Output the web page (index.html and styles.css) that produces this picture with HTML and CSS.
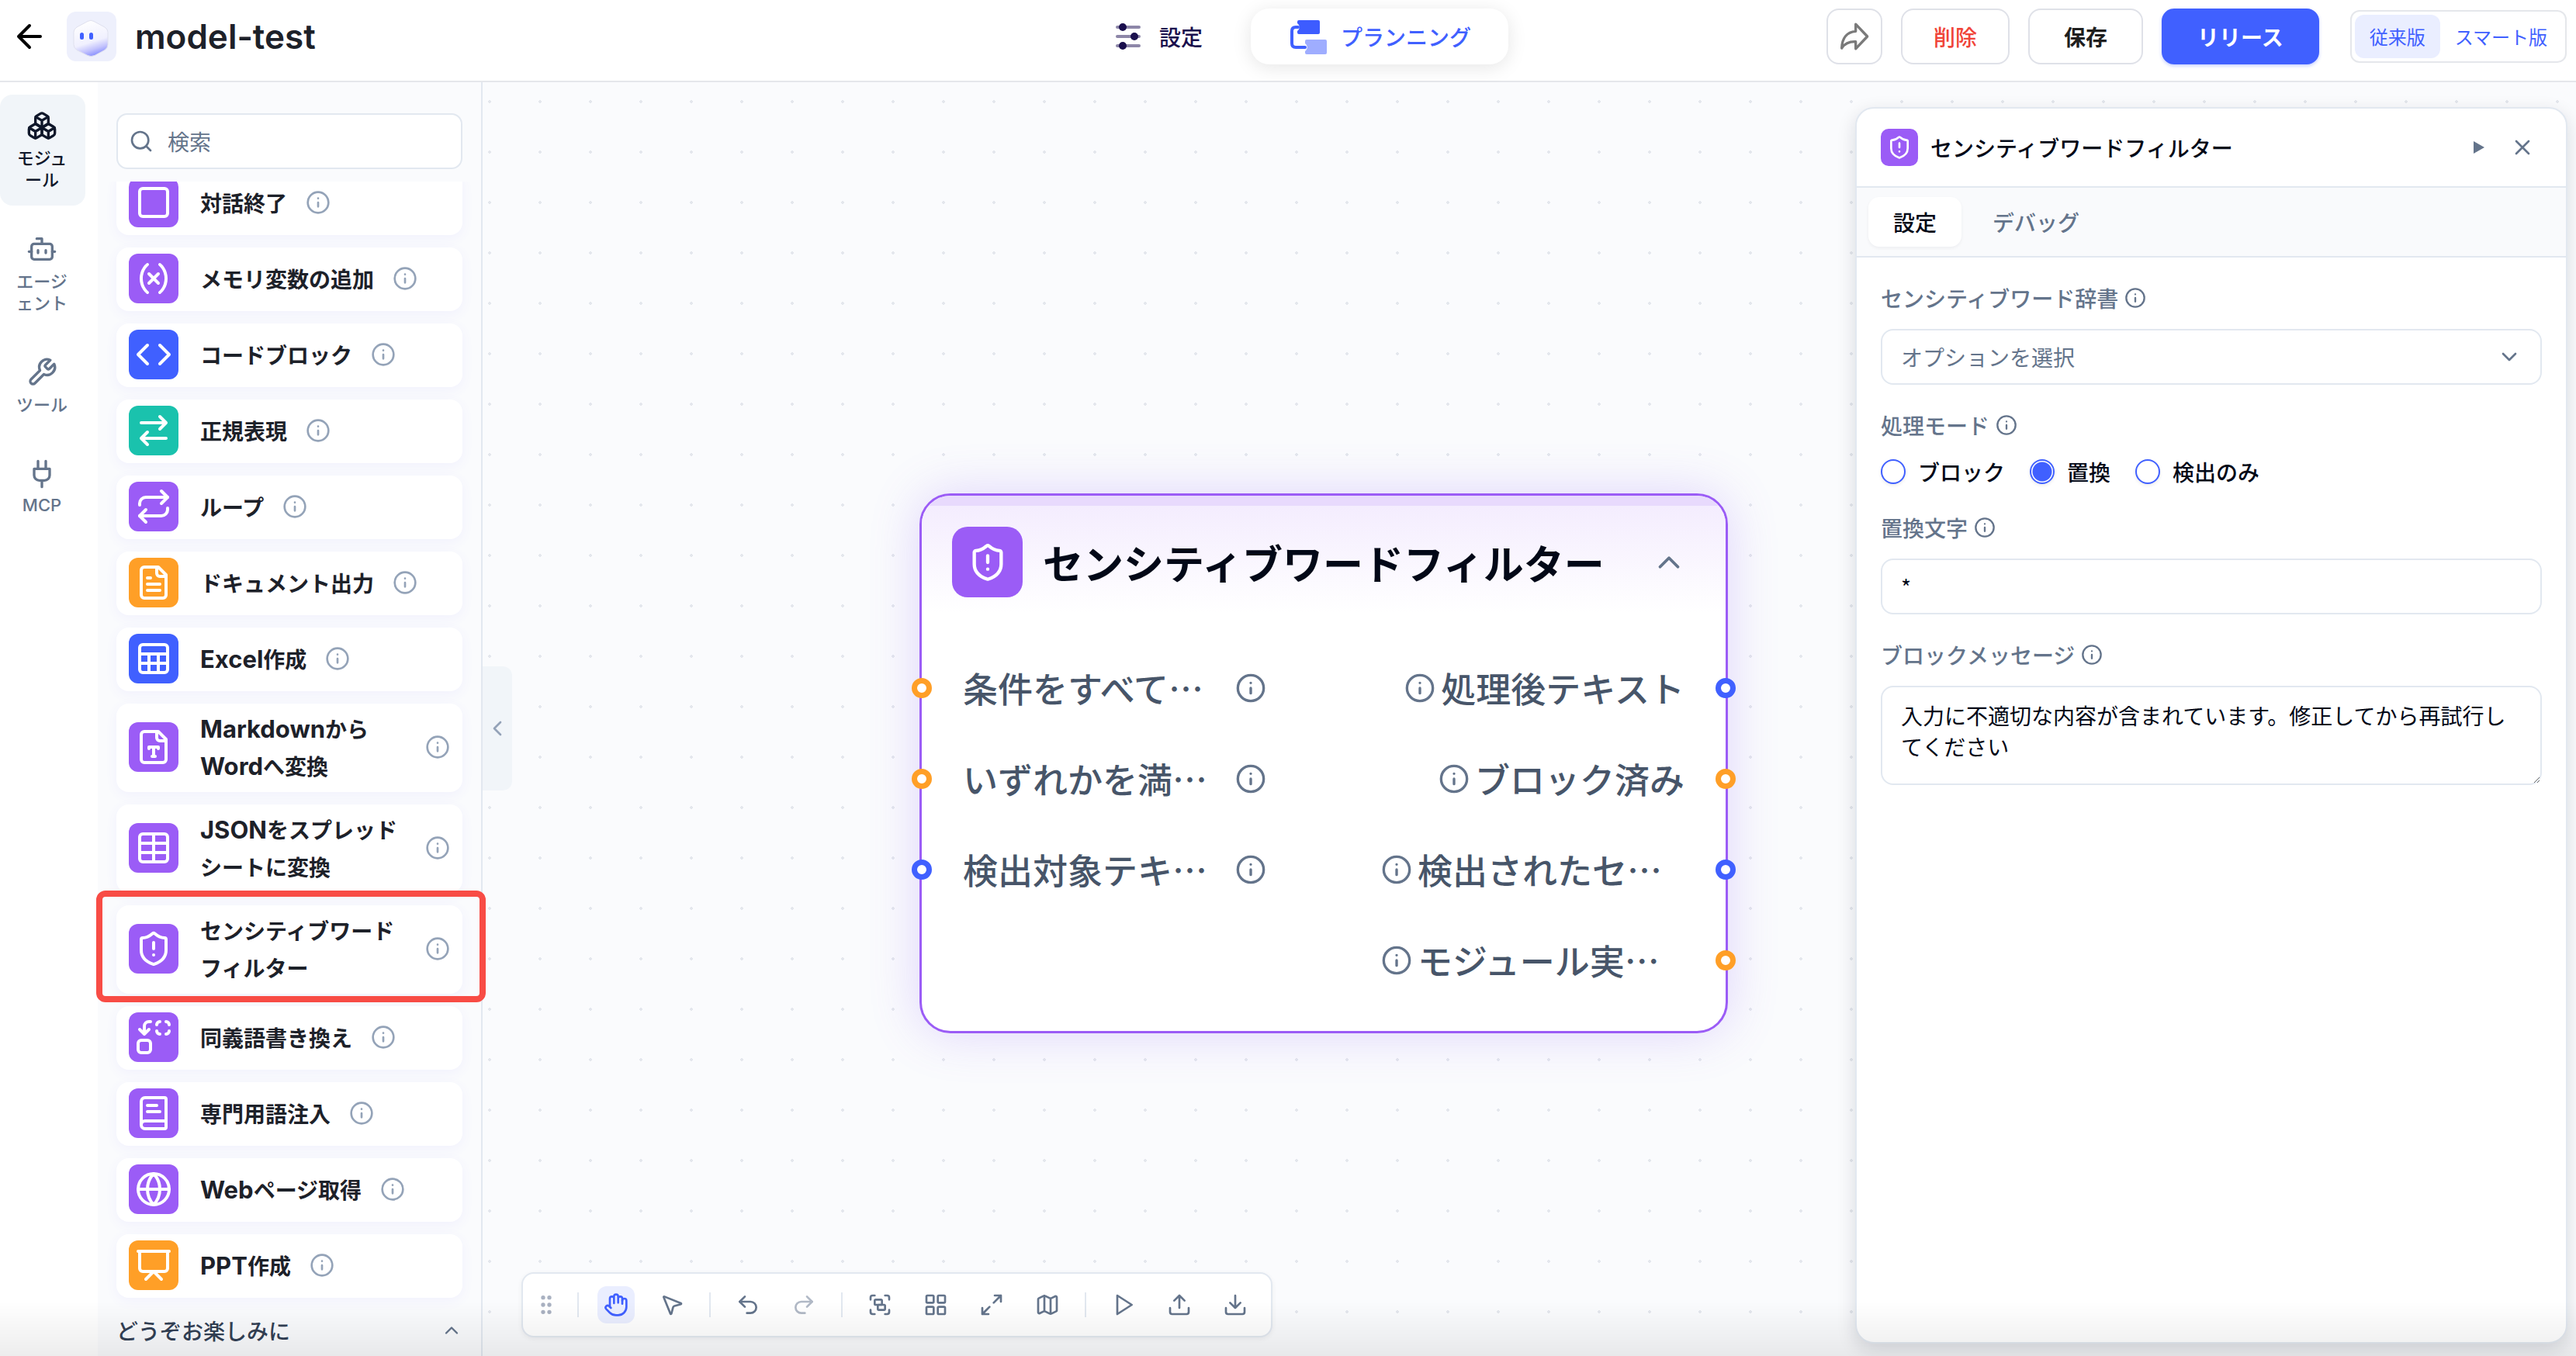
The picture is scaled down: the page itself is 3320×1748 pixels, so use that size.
FILE: index.html
```html
<!DOCTYPE html>
<html lang="ja">
<head>
    <meta charset="UTF-8">
    <meta name="viewport" content="width=device-width, initial-scale=1.0">
    <title>model-test</title>
    <link rel="stylesheet" href="styles.css">
</head>
<body>
    <!-- Icon sprite -->
    <svg class="sprite" aria-hidden="true">
        <symbol id="i-info" viewBox="0 0 24 24"><circle cx="12" cy="12" r="10"/><path d="M12 16v-4M12 8h.01"/></symbol>
        <symbol id="i-back" viewBox="0 0 24 24"><path d="m12 19-7-7 7-7M19 12H5"/></symbol>
        <symbol id="i-search" viewBox="0 0 24 24"><circle cx="11" cy="11" r="8"/><path d="m21 21-4.3-4.3"/></symbol>
        <symbol id="i-boxes" viewBox="0 0 24 24"><path d="M2.97 12.92A2 2 0 0 0 2 14.63v3.24a2 2 0 0 0 .97 1.71l3 1.8a2 2 0 0 0 2.06 0L12 19v-5.5l-5-3-4.03 2.42Z"/><path d="m7 16.5-4.74-2.85M7 16.5l5-3M7 16.5v5.17"/><path d="M12 13.5V19l3.97 2.38a2 2 0 0 0 2.06 0l3-1.8a2 2 0 0 0 .97-1.71v-3.24a2 2 0 0 0-.97-1.71L17 10.5l-5 3Z"/><path d="m17 16.5-5-3M17 16.5l4.74-2.85M17 16.5v5.17"/><path d="M7.97 4.42A2 2 0 0 0 7 6.13v4.37l5 3 5-3V6.13a2 2 0 0 0-.97-1.71l-3-1.8a2 2 0 0 0-2.06 0l-3 1.8Z"/><path d="M12 8 7.26 5.15M12 8l4.74-2.85M12 13.5V8"/></symbol>
        <symbol id="i-bot" viewBox="0 0 24 24"><path d="M12 8V4H8"/><rect width="16" height="12" x="4" y="8" rx="2"/><path d="M2 14h2M20 14h2M15 13v2M9 13v2"/></symbol>
        <symbol id="i-wrench" viewBox="0 0 24 24"><path d="M14.7 6.3a1 1 0 0 0 0 1.4l1.6 1.6a1 1 0 0 0 1.4 0l3.77-3.77a6 6 0 0 1-7.94 7.94l-6.91 6.91a2.12 2.12 0 0 1-3-3l6.91-6.91a6 6 0 0 1 7.94-7.94l-3.76 3.76z"/></symbol>
        <symbol id="i-plug" viewBox="0 0 24 24"><path d="M12 22v-5M9 8V2M15 8V2M18 8v5a4 4 0 0 1-4 4h-4a4 4 0 0 1-4-4V8Z"/></symbol>
        <symbol id="i-square" viewBox="0 0 24 24"><rect width="18" height="18" x="3" y="3" rx="2"/></symbol>
        <symbol id="i-variable" viewBox="0 0 24 24"><path d="M8 21s-4-3-4-9 4-9 4-9M16 3s4 3 4 9-4 9-4 9M15 9l-6 6M9 9l6 6"/></symbol>
        <symbol id="i-code" viewBox="0 0 24 24"><path d="m16 18 6-6-6-6M8 6l-6 6 6 6"/></symbol>
        <symbol id="i-swap" viewBox="0 0 24 24"><path d="m16 3 4 4-4 4M20 7H4M8 21l-4-4 4-4M4 17h16"/></symbol>
        <symbol id="i-repeat" viewBox="0 0 24 24"><path d="m17 2 4 4-4 4"/><path d="M3 11v-1a4 4 0 0 1 4-4h14M7 22l-4-4 4-4"/><path d="M21 13v1a4 4 0 0 1-4 4H3"/></symbol>
        <symbol id="i-file" viewBox="0 0 24 24"><path d="M15 2H6a2 2 0 0 0-2 2v16a2 2 0 0 0 2 2h12a2 2 0 0 0 2-2V7Z"/><path d="M14 2v4a2 2 0 0 0 2 2h4M10 9H8M16 13H8M16 17H8"/></symbol>
        <symbol id="i-sheet" viewBox="0 0 24 24"><rect width="18" height="18" x="3" y="3" rx="2"/><path d="M3 9h18M3 15h18M9 9v12M15 9v12"/></symbol>
        <symbol id="i-filetype" viewBox="0 0 24 24"><path d="M15 2H6a2 2 0 0 0-2 2v16a2 2 0 0 0 2 2h12a2 2 0 0 0 2-2V7Z"/><path d="M14 2v4a2 2 0 0 0 2 2h4M9 13v-1h6v1M12 12v6M11 18h2"/></symbol>
        <symbol id="i-table" viewBox="0 0 24 24"><rect width="18" height="18" x="3" y="3" rx="2"/><path d="M12 3v18M3 9h18M3 15h18"/></symbol>
        <symbol id="i-shield" viewBox="0 0 24 24"><path d="M20 13c0 5-3.5 7.5-7.66 8.95a1 1 0 0 1-.67-.01C7.5 20.5 4 18 4 13V6a1 1 0 0 1 1-1c2 0 4.5-1.2 6.24-2.72a1.17 1.17 0 0 1 1.52 0C14.51 3.81 17 5 19 5a1 1 0 0 1 1 1z"/><path d="M12 8v4M12 16h.01"/></symbol>
        <symbol id="i-replace" viewBox="0 0 24 24"><path d="M14 4c0-1.1.9-2 2-2M20 2c1.1 0 2 .9 2 2M22 8c0 1.1-.9 2-2 2M16 10c-1.1 0-2-.9-2-2M3 7l3 3 3-3M6 10V5c0-1.7 1.3-3 3-3h1"/><rect width="8" height="8" x="2" y="14" rx="2"/></symbol>
        <symbol id="i-book" viewBox="0 0 24 24"><path d="M4 19.5v-15A2.5 2.5 0 0 1 6.5 2H19a1 1 0 0 1 1 1v18a1 1 0 0 1-1 1H6.5a1 1 0 0 1 0-5H20M8 11h8M8 7h6"/></symbol>
        <symbol id="i-globe" viewBox="0 0 24 24"><circle cx="12" cy="12" r="10"/><path d="M12 2a14.5 14.5 0 0 0 0 20 14.5 14.5 0 0 0 0-20M2 12h20"/></symbol>
        <symbol id="i-ppt" viewBox="0 0 24 24"><path d="M2 3h20M21 3v11a2 2 0 0 1-2 2H5a2 2 0 0 1-2-2V3M7 21l5-5 5 5"/></symbol>
        <symbol id="i-up" viewBox="0 0 24 24"><path d="m18 15-6-6-6 6"/></symbol>
        <symbol id="i-down" viewBox="0 0 24 24"><path d="m6 9 6 6 6-6"/></symbol>
        <symbol id="i-left" viewBox="0 0 24 24"><path d="m15 18-6-6 6-6"/></symbol>
        <symbol id="i-close" viewBox="0 0 24 24"><path d="M18 6 6 18M6 6l12 12"/></symbol>
        <symbol id="i-grip" viewBox="0 0 24 24"><circle cx="9" cy="12" r="1"/><circle cx="9" cy="5" r="1"/><circle cx="9" cy="19" r="1"/><circle cx="15" cy="12" r="1"/><circle cx="15" cy="5" r="1"/><circle cx="15" cy="19" r="1"/></symbol>
        <symbol id="i-hand" viewBox="0 0 24 24"><path d="M18 11V6a2 2 0 0 0-4 0M14 10V4a2 2 0 0 0-4 0v2M10 10.5V6a2 2 0 0 0-4 0v8"/><path d="M18 8a2 2 0 1 1 4 0v6a8 8 0 0 1-8 8h-2c-2.8 0-4.5-.86-5.99-2.34l-3.6-3.6a2 2 0 0 1 2.83-2.82L7 15"/></symbol>
        <symbol id="i-pointer" viewBox="0 0 24 24"><path d="M4.04 4.69a.5.5 0 0 1 .65-.65l16 6.5a.5.5 0 0 1-.06.95l-6.13 1.58a2 2 0 0 0-1.43 1.43l-1.58 6.13a.5.5 0 0 1-.95.06z"/></symbol>
        <symbol id="i-undo" viewBox="0 0 24 24"><path d="M9 14 4 9l5-5"/><path d="M4 9h10.5a5.5 5.5 0 0 1 0 11H11"/></symbol>
        <symbol id="i-redo" viewBox="0 0 24 24"><path d="m15 14 5-5-5-5"/><path d="M20 9H9.5a5.5 5.5 0 0 0 0 11H13"/></symbol>
        <symbol id="i-group" viewBox="0 0 24 24"><path d="M3 7V5c0-1.1.9-2 2-2h2M17 3h2c1.1 0 2 .9 2 2v2M21 17v2c0 1.1-.9 2-2 2h-2M7 21H5c-1.1 0-2-.9-2-2v-2"/><rect width="7" height="5" x="7" y="7" rx="1"/><rect width="7" height="5" x="10" y="12" rx="1"/></symbol>
        <symbol id="i-grid" viewBox="0 0 24 24"><rect width="7" height="7" x="3" y="3" rx="1"/><rect width="7" height="7" x="14" y="3" rx="1"/><rect width="7" height="7" x="14" y="14" rx="1"/><rect width="7" height="7" x="3" y="14" rx="1"/></symbol>
        <symbol id="i-expand" viewBox="0 0 24 24"><path d="M15 3h6v6M9 21H3v-6M21 3l-7 7M3 21l7-7"/></symbol>
        <symbol id="i-map" viewBox="0 0 24 24"><path d="M14.1 5.55a2 2 0 0 0 1.8 0l3.65-1.83A1 1 0 0 1 21 4.62v12.76a1 1 0 0 1-.55.9l-4.55 2.27a2 2 0 0 1-1.8 0l-4.2-2.1a2 2 0 0 0-1.8 0l-3.65 1.83A1 1 0 0 1 3 19.38V6.62a1 1 0 0 1 .55-.9l4.55-2.27a2 2 0 0 1 1.8 0zM15 5.76v15M9 3.24v15"/></symbol>
        <symbol id="i-play" viewBox="0 0 24 24"><path d="m6 3 14 9-14 9z"/></symbol>
        <symbol id="i-upload" viewBox="0 0 24 24"><path d="M21 15v4a2 2 0 0 1-2 2H5a2 2 0 0 1-2-2v-4M17 8l-5-5-5 5M12 3v12"/></symbol>
        <symbol id="i-download" viewBox="0 0 24 24"><path d="M21 15v4a2 2 0 0 1-2 2H5a2 2 0 0 1-2-2v-4M7 10l5 5 5-5M12 15V3"/></symbol>
        <symbol id="i-share" viewBox="0 0 24 24"><path d="M13 2.5 22 12l-9 9.5V16C8 15.8 4.5 17.5 2.2 21 2.5 13.5 6 8.5 13 8Z"/></symbol>
    </svg>

    <header class="topbar">
        <div class="topbar-left">
            <button class="back" aria-label="戻る"><svg class="icon"><use href="#i-back"/></svg></button>
            <div class="avatar">
                <svg viewBox="0 0 64 64" width="64" height="64">
                    <defs>
                        <linearGradient id="bot-fill" x1="0.35" y1="0" x2="0.65" y2="1">
                            <stop offset="0" stop-color="#ffffff"/>
                            <stop offset="0.6" stop-color="#f0f0fe"/>
                            <stop offset="0.8" stop-color="#c3c3fd"/>
                            <stop offset="1" stop-color="#7f88ff"/>
                        </linearGradient>
                    </defs>
                    <path d="M27 12.5q4-2.5 8 0l14 7.5q4 2.5 4 6.5v16q0 4-4 7l-13 7q-5 2-9 0l-14-7q-4-3-4-7v-16q0-4 4-6.5z" fill="url(#bot-fill)" stroke="#dfe0ee" stroke-width="1"/>
                    <rect x="17" y="27" width="5" height="9" rx="2.5" fill="#4060ff"/>
                    <rect x="29" y="27" width="5" height="9" rx="2.5" fill="#4060ff"/>
                </svg>
            </div>
            <h1>model-test</h1>
        </div>
        <nav class="topbar-tabs">
            <button class="top-tab">
                <svg viewBox="0 0 36 36" width="36" height="36">
                    <path d="M4 6h28M4 18h28M4 30h28" stroke="#8d86a8" stroke-width="4" stroke-linecap="round"/>
                    <circle cx="11" cy="6" r="5" fill="#1a0f4d"/>
                    <circle cx="26" cy="18" r="5" fill="#1a0f4d"/>
                    <circle cx="11" cy="30" r="5" fill="#1a0f4d"/>
                </svg>
                設定
            </button>
            <button class="top-tab active">
                <svg viewBox="0 0 52 48" width="52" height="48">
                    <path d="M14 3h25q2 0 2 2v14q0 2-2 2H14q-2 0-2-2v-2a6 6 0 0 0 0-10V5q0-2 2-2z" fill="#3d5cff"/>
                    <path d="M24 28h24q2 0 2 2v15q0 2-2 2H24q-2 0-2-2v-2a6 6 0 0 0 0-10v-3q0-2 2-2z" fill="#9fadff"/>
                    <path d="M13 12H10q-5 0-5 5v16q0 5 5 5h12" fill="none" stroke="#4060ff" stroke-width="4" stroke-linecap="round"/>
                </svg>
                プランニング
            </button>
        </nav>
        <div class="topbar-right">
            <button class="btn btn-icon" aria-label="共有"><svg class="icon"><use href="#i-share"/></svg></button>
            <button class="btn btn-delete">削除</button>
            <button class="btn btn-save">保存</button>
            <button class="btn btn-release">リリース</button>
            <div class="version">
                <button class="active">従来版</button>
                <button>スマート版</button>
            </div>
        </div>
    </header>

    <div class="workspace">
        <nav class="rail">
            <button class="rail-item active"><svg class="icon"><use href="#i-boxes"/></svg><span>モジュール</span></button>
            <button class="rail-item"><svg class="icon"><use href="#i-bot"/></svg><span>エージェント</span></button>
            <button class="rail-item"><svg class="icon"><use href="#i-wrench"/></svg><span>ツール</span></button>
            <button class="rail-item"><svg class="icon"><use href="#i-plug"/></svg><span class="en">MCP</span></button>
        </nav>

        <aside class="modules">
            <div class="search">
                <svg class="icon"><use href="#i-search"/></svg>
                <input type="text" placeholder="検索" aria-label="検索">
            </div>
            <div class="module-scroll">
                <ul class="module-list">
                    <li class="module"><span class="tile purple"><svg class="icon"><use href="#i-square"/></svg></span><span class="name">対話終了</span><svg class="icon info"><use href="#i-info"/></svg></li>
                    <li class="module"><span class="tile purple"><svg class="icon"><use href="#i-variable"/></svg></span><span class="name">メモリ変数の追加</span><svg class="icon info"><use href="#i-info"/></svg></li>
                    <li class="module"><span class="tile blue"><svg class="icon"><use href="#i-code"/></svg></span><span class="name">コードブロック</span><svg class="icon info"><use href="#i-info"/></svg></li>
                    <li class="module"><span class="tile teal"><svg class="icon"><use href="#i-swap"/></svg></span><span class="name">正規表現</span><svg class="icon info"><use href="#i-info"/></svg></li>
                    <li class="module"><span class="tile purple"><svg class="icon"><use href="#i-repeat"/></svg></span><span class="name">ループ</span><svg class="icon info"><use href="#i-info"/></svg></li>
                    <li class="module"><span class="tile orange"><svg class="icon"><use href="#i-file"/></svg></span><span class="name">ドキュメント出力</span><svg class="icon info"><use href="#i-info"/></svg></li>
                    <li class="module"><span class="tile blue"><svg class="icon"><use href="#i-sheet"/></svg></span><span class="name"><span class="en">Excel</span>作成</span><svg class="icon info"><use href="#i-info"/></svg></li>
                    <li class="module"><span class="tile purple"><svg class="icon"><use href="#i-filetype"/></svg></span><span class="name"><span class="en">Markdown</span>から<span class="en">Word</span>へ変換</span><svg class="icon info"><use href="#i-info"/></svg></li>
                    <li class="module"><span class="tile purple"><svg class="icon"><use href="#i-table"/></svg></span><span class="name"><span class="en">JSON</span>をスプレッドシートに変換</span><svg class="icon info"><use href="#i-info"/></svg></li>
                    <li class="module marked"><span class="tile purple"><svg class="icon"><use href="#i-shield"/></svg></span><span class="name">センシティブワードフィルター</span><svg class="icon info"><use href="#i-info"/></svg></li>
                    <li class="module"><span class="tile purple"><svg class="icon"><use href="#i-replace"/></svg></span><span class="name">同義語書き換え</span><svg class="icon info"><use href="#i-info"/></svg></li>
                    <li class="module"><span class="tile purple"><svg class="icon"><use href="#i-book"/></svg></span><span class="name">専門用語注入</span><svg class="icon info"><use href="#i-info"/></svg></li>
                    <li class="module"><span class="tile purple"><svg class="icon"><use href="#i-globe"/></svg></span><span class="name"><span class="en">Web</span>ページ取得</span><svg class="icon info"><use href="#i-info"/></svg></li>
                    <li class="module"><span class="tile orange"><svg class="icon"><use href="#i-ppt"/></svg></span><span class="name"><span class="en">PPT</span>作成</span><svg class="icon info"><use href="#i-info"/></svg></li>
                </ul>
                <button class="module-group">どうぞお楽しみに<svg class="icon"><use href="#i-up"/></svg></button>
            </div>
        </aside>

        <main class="canvas">
            <button class="collapse" aria-label="折りたたむ"><svg class="icon"><use href="#i-left"/></svg></button>

            <section class="node">
                <div class="node-head">
                    <span class="node-tile"><svg class="icon"><use href="#i-shield"/></svg></span>
                    <h2>センシティブワードフィルター</h2>
                    <svg class="icon node-toggle"><use href="#i-up"/></svg>
                </div>
                <div class="ports">
                    <ul class="inputs">
                        <li class="port orange"><span class="port-name cut">条件をすべて…</span><svg class="icon"><use href="#i-info"/></svg></li>
                        <li class="port orange"><span class="port-name cut">いずれかを満…</span><svg class="icon"><use href="#i-info"/></svg></li>
                        <li class="port blue"><span class="port-name cut">検出対象テキ…</span><svg class="icon"><use href="#i-info"/></svg></li>
                    </ul>
                    <ul class="outputs">
                        <li class="port blue"><svg class="icon"><use href="#i-info"/></svg><span class="port-name">処理後テキスト</span></li>
                        <li class="port orange"><svg class="icon"><use href="#i-info"/></svg><span class="port-name">ブロック済み</span></li>
                        <li class="port blue"><svg class="icon"><use href="#i-info"/></svg><span class="port-name cut">検出されたセ…</span></li>
                        <li class="port orange"><svg class="icon"><use href="#i-info"/></svg><span class="port-name cut">モジュール実…</span></li>
                    </ul>
                </div>
            </section>

            <div class="toolbar">
                <svg class="icon grip"><use href="#i-grip"/></svg>
                <span class="sep"></span>
                <button class="tool active" aria-label="移動"><svg class="icon"><use href="#i-hand"/></svg></button>
                <button class="tool" aria-label="選択"><svg class="icon"><use href="#i-pointer"/></svg></button>
                <span class="sep"></span>
                <button class="tool" aria-label="元に戻す"><svg class="icon"><use href="#i-undo"/></svg></button>
                <button class="tool" aria-label="やり直す" disabled><svg class="icon"><use href="#i-redo"/></svg></button>
                <span class="sep"></span>
                <button class="tool" aria-label="グループ"><svg class="icon"><use href="#i-group"/></svg></button>
                <button class="tool" aria-label="整列"><svg class="icon"><use href="#i-grid"/></svg></button>
                <button class="tool" aria-label="全体表示"><svg class="icon"><use href="#i-expand"/></svg></button>
                <button class="tool" aria-label="マップ"><svg class="icon"><use href="#i-map"/></svg></button>
                <span class="sep"></span>
                <button class="tool" aria-label="実行"><svg class="icon"><use href="#i-play"/></svg></button>
                <button class="tool" aria-label="アップロード"><svg class="icon"><use href="#i-upload"/></svg></button>
                <button class="tool" aria-label="ダウンロード"><svg class="icon"><use href="#i-download"/></svg></button>
            </div>

            <aside class="panel">
                <div class="panel-head">
                    <span class="panel-tile"><svg class="icon"><use href="#i-shield"/></svg></span>
                    <h2>センシティブワードフィルター</h2>
                    <button class="panel-btn" aria-label="実行"><svg viewBox="0 0 32 32" width="32" height="32"><path d="M9 8l14 8-14 8z" fill="#64748b"/></svg></button>
                    <button class="panel-btn" aria-label="閉じる"><svg class="icon"><use href="#i-close"/></svg></button>
                </div>
                <div class="panel-tabs">
                    <button class="active">設定</button>
                    <button>デバッグ</button>
                </div>
                <form class="panel-body">
                    <div class="field">
                        <label for="dictionary">センシティブワード辞書 <svg class="icon"><use href="#i-info"/></svg></label>
                        <div class="select">
                            <select id="dictionary">
                                <option>オプションを選択</option>
                            </select>
                            <svg class="icon"><use href="#i-down"/></svg>
                        </div>
                    </div>
                    <fieldset class="field">
                        <legend>処理モード <svg class="icon"><use href="#i-info"/></svg></legend>
                        <div class="radios">
                            <label><input type="radio" name="mode">ブロック</label>
                            <label><input type="radio" name="mode" checked>置換</label>
                            <label><input type="radio" name="mode">検出のみ</label>
                        </div>
                    </fieldset>
                    <div class="field">
                        <label for="mask">置換文字 <svg class="icon"><use href="#i-info"/></svg></label>
                        <input class="control" type="text" id="mask" value="*">
                    </div>
                    <div class="field">
                        <label for="message">ブロックメッセージ <svg class="icon"><use href="#i-info"/></svg></label>
                        <textarea class="control" id="message" rows="2">入力に不適切な内容が含まれています。修正してから再試行してください</textarea>
                    </div>
                </form>
            </aside>
        </main>
    </div>
    <div class="bottom-fade"></div>
</body>
</html>
```

FILE: styles.css
```css
*, *::before, *::after {
    box-sizing: border-box;
}
body {
    margin: 0;
    height: 100vh;
    display: flex;
    flex-direction: column;
    overflow: hidden;
    font-family: "Noto Sans CJK JP", sans-serif;
    font-size: 28px;
    line-height: 40px;
    color: #020817;
    background: #fff;
}
h1, h2, ul {
    margin: 0;
    padding: 0;
    list-style: none;
}
button, input, select, textarea {
    font: inherit;
    color: inherit;
}
button {
    display: flex;
    align-items: center;
    justify-content: center;
    padding: 0;
    border: none;
    background: none;
    cursor: pointer;
    white-space: nowrap;
}
svg {
    display: block;
    flex: none;
}
.sprite {
    position: absolute;
    width: 0;
    height: 0;
}
.icon {
    width: 32px;
    height: 32px;
    fill: none;
    stroke: currentColor;
    stroke-width: 2;
    stroke-linecap: round;
    stroke-linejoin: round;
}
.en {
    font-family: Inter, sans-serif;
}

/* Top bar */
.topbar {
    display: grid;
    grid-template-columns: 1fr auto 1fr;
    align-items: center;
    height: 106px;
    padding: 0 12px 10px;
    border-bottom: 2px solid #e5e7eb;
    flex: none;
}
.topbar-left {
    display: flex;
    align-items: center;
}
.back {
    width: 52px;
    color: #000;
}
.back .icon {
    width: 48px;
    height: 48px;
}
.avatar {
    margin: 0 24px 0 22px;
    border-radius: 12px;
    background: #eef0fc;
}
h1 {
    font-family: Inter, sans-serif;
    font-size: 44px;
    font-weight: 600;
    line-height: 56px;
    color: #1d2129;
}
.topbar-tabs {
    display: flex;
    gap: 2px;
}
.top-tab {
    height: 72px;
    padding: 0 60px;
    gap: 22px;
    border-radius: 24px;
    font-weight: 500;
    color: #1a0f4d;
}
.top-tab.active {
    padding: 0 48px;
    gap: 16px;
    color: #4060ff;
    background: #fff;
    box-shadow: 0 4px 24px rgba(0, 0, 0, 0.1);
}
.topbar-right {
    display: flex;
    align-items: center;
    justify-content: flex-end;
    gap: 24px;
}
.btn {
    height: 72px;
    padding: 0 44px;
    border: 2px solid #dfe1e8;
    border-radius: 16px;
    background: #fff;
    font-weight: 500;
}
.btn-icon {
    width: 72px;
    padding: 0;
    color: #7a7a7a;
}
.btn-icon .icon {
    width: 40px;
    height: 40px;
}
.btn-delete {
    padding: 0 40px;
    color: #f04438;
}
.btn-save {
    font-weight: 700;
    color: #1f1f1f;
}
.btn-release {
    border-color: #4060ff;
    background: #4060ff;
    font-weight: 700;
    color: #fff;
    box-shadow: 0 2px 4px rgba(64, 96, 255, 0.3);
}
.version {
    display: flex;
    margin-left: 16px;
    padding: 4px;
    border: 2px solid #e5e7eb;
    border-radius: 12px;
    font-size: 24px;
    color: #4060ff;
}
.version button {
    height: 56px;
    padding: 0 19px;
    border-radius: 12px;
}
.version .active {
    background: #eaeeff;
}

/* Left rail */
.workspace {
    flex: 1;
    min-height: 0;
    display: flex;
}
.rail {
    width: 126px;
    flex: none;
    display: flex;
    flex-direction: column;
    gap: 16px;
    padding: 16px 16px 0 0;
}
.rail-item {
    flex-direction: column;
    gap: 6px;
    padding: 20px 22px 21px 20px;
    border-radius: 16px;
    font-size: 22px;
    font-weight: 500;
    line-height: 28px;
    white-space: normal;
    color: #64748b;
}
.rail-item span {
    width: 66px;
    word-break: break-all;
    line-break: anywhere;
}
.rail-item .icon {
    width: 40px;
    height: 40px;
}
.rail-item.active {
    background: #f1f5f9;
    color: #0f172a;
}

/* Module list */
.modules {
    position: relative;
    z-index: 1;
    width: 496px;
    flex: none;
    display: flex;
    flex-direction: column;
    gap: 16px;
    padding-top: 40px;
    border-right: 2px solid #e2e8f0;
    background: #fafbfd;
}
.search {
    display: flex;
    align-items: center;
    gap: 18px;
    height: 72px;
    margin: 0 24px;
    padding: 0 14px;
    border: 2px solid #e2e8f0;
    border-radius: 14px;
    background: #fff;
    color: #64748b;
}
.search input {
    flex: 1;
    min-width: 0;
    padding: 0;
    border: none;
    outline: none;
    background: none;
}
.search input::placeholder {
    color: #64748b;
}
.module-scroll {
    flex: 1;
    min-height: 0;
    padding: 0 24px;
    overflow-x: visible;
    overflow-y: clip;
}
/* list is scrolled a little, first card is partly hidden */
.module-list {
    display: flex;
    flex-direction: column;
    gap: 16px;
    margin-top: -13px;
}
.module {
    position: relative;
    display: flex;
    align-items: center;
    padding: 8px 16px 10px;
    border-radius: 16px;
    background: #fff;
    box-shadow: 0 4px 16px rgba(96, 80, 255, 0.06);
}
.tile {
    display: flex;
    align-items: center;
    justify-content: center;
    flex: none;
    width: 64px;
    height: 64px;
    border-radius: 12px;
    color: #fff;
}
.tile .icon {
    width: 48px;
    height: 48px;
}
.tile.purple {
    background: #9b5cf6;
}
.tile.blue {
    background: #4060ff;
}
.tile.teal {
    background: #1ac2ad;
}
.tile.orange {
    background: #ff9f27;
}
.name {
    min-width: 0;
    margin: 0 24px 0 28px;
    font-weight: 700;
    line-height: 48px;
    color: #1d2129;
}
.name .en {
    font-size: 31px;
    line-height: 32px;
}
.info {
    color: #94a3b8;
}
.marked::after {
    content: "";
    position: absolute;
    inset: -19px -30px -11px -26px;
    border: 8px solid #f84c45;
    border-radius: 12px;
}
.module-group {
    width: 100%;
    justify-content: space-between;
    padding: 22px 0;
    font-weight: 500;
    color: #334155;
}
.module-group .icon {
    width: 28px;
    height: 28px;
    color: #64748b;
}

/* Canvas */
.canvas {
    position: relative;
    flex: 1;
    min-width: 0;
    background: #fafbfd radial-gradient(circle at 9px 25px, #e4e7ed 2px, transparent 2px) 0 0 / 65px 65px;
}
.collapse {
    position: absolute;
    top: 753px;
    left: 0;
    width: 38px;
    height: 160px;
    border-radius: 0 12px 12px 0;
    background: #f1f5f9;
    color: #94a3b8;
}

/* Node */
.node {
    position: absolute;
    top: 530px;
    left: 563px;
    width: 1042px;
    border: 3px solid #9b5cf6;
    border-radius: 40px;
    background: #fff;
    box-shadow: 0 0 64px rgba(140, 92, 246, 0.24);
}
.node-head {
    display: flex;
    align-items: center;
    padding: 40px 50px 40px 39px;
    border-radius: 37px 37px 0 0;
    background:
        linear-gradient(#e8dafd, #e8dafd) 0 0 / 100% 13px no-repeat,
        linear-gradient(#f3ebfe, #ffffff 88%);
}
.node-tile {
    display: flex;
    align-items: center;
    justify-content: center;
    width: 91px;
    height: 91px;
    border-radius: 20px;
    background: #9b5cf6;
    color: #fff;
}
.node-tile .icon {
    width: 52px;
    height: 52px;
}
.node h2 {
    flex: 1;
    margin-left: 26px;
    font-size: 52px;
    font-weight: 700;
    line-height: 72px;
}
.node-toggle {
    width: 46px;
    height: 46px;
    color: #64748b;
}
.ports {
    display: flex;
    justify-content: space-between;
    padding: 18px 0 33px;
    font-size: 45px;
    font-weight: 500;
    color: #475569;
}
.port {
    position: relative;
    display: flex;
    align-items: center;
    gap: 7px;
    height: 117px;
    padding: 0 53px;
}
.outputs .port {
    justify-content: flex-end;
}
.port .icon {
    width: 40px;
    height: 40px;
    color: #64748b;
}
.port-name {
    line-height: 64px;
    white-space: nowrap;
}
.port-name.cut {
    width: 344px;
}
.port::before {
    content: "";
    position: absolute;
    top: 46px;
    left: -13px;
    width: 26px;
    height: 26px;
    border: 7px solid #4060ff;
    border-radius: 50%;
    background: #fff;
}
.outputs .port::before {
    left: auto;
    right: -13px;
}
.port.orange::before {
    border-color: #ff9f27;
}

/* Toolbar */
.toolbar {
    position: absolute;
    left: 50px;
    bottom: 24px;
    display: flex;
    align-items: center;
    gap: 24px;
    padding: 16px 22px 16px 14px;
    border: 2px solid #e2e8f0;
    border-radius: 16px;
    background: #fff;
    color: #64748b;
    box-shadow: 0 2px 6px rgba(15, 23, 42, 0.06);
}
.grip {
    color: #a9b1c1;
}
.sep {
    width: 2px;
    height: 32px;
    background: #e2e8f0;
}
.tool {
    width: 48px;
    height: 48px;
    border-radius: 12px;
}
.tool.active {
    background: #eaeeff;
    color: #4060ff;
}
.tool:disabled {
    color: #b1b9c6;
}

/* Settings panel */
.panel {
    position: absolute;
    top: 32px;
    right: 11px;
    bottom: 16px;
    width: 918px;
    border: 2px solid #e2e8f0;
    border-radius: 24px;
    background: #fff;
    overflow: hidden;
    box-shadow: 0 8px 24px rgba(15, 23, 42, 0.14);
}
.panel-head {
    display: flex;
    align-items: center;
    gap: 24px;
    height: 102px;
    padding: 0 40px 0 31px;
    border-bottom: 2px solid #e2e8f0;
}
.panel-tile {
    display: flex;
    align-items: center;
    justify-content: center;
    width: 48px;
    height: 48px;
    border-radius: 10px;
    background: #9b5cf6;
    color: #fff;
}
.panel h2 {
    flex: 1;
    margin-left: -8px;
    font-size: 28px;
    font-weight: 500;
}
.panel-btn {
    color: #64748b;
}
.panel-tabs {
    display: flex;
    gap: 8px;
    padding: 12px 15px;
    border-bottom: 2px solid #e2e8f0;
    background: #f9fafc;
}
.panel-tabs button {
    height: 64px;
    padding: 0 32px;
    border-radius: 14px;
    font-weight: 500;
    color: #64748b;
}
.panel-tabs .active {
    background: #fff;
    color: #020817;
    box-shadow: 0 2px 4px rgba(15, 23, 42, 0.05);
}
.panel-body {
    display: flex;
    flex-direction: column;
    gap: 32px;
    padding: 32px 31px;
}
.field {
    display: flex;
    flex-direction: column;
    gap: 20px;
    margin: 0;
    padding: 0;
    border: none;
}
.field > label, .field > legend {
    display: flex;
    align-items: center;
    gap: 8px;
    padding: 0;
    font-weight: 500;
    color: #64748b;
}
.field > legend {
    margin-bottom: 20px;
}
.field > label .icon, .field > legend .icon {
    width: 28px;
    height: 28px;
}
.control, .select select {
    width: 100%;
    height: 72px;
    padding: 0 24px;
    border: 2px solid #e2e8f0;
    border-radius: 16px;
    background: #fff;
    outline: none;
}
textarea.control {
    display: block;
    height: 128px;
    padding: 16px 24px;
    resize: vertical;
    overflow: hidden;
}
.select {
    position: relative;
}
.select select {
    display: block;
    appearance: none;
    color: #64748b;
}
.select .icon {
    position: absolute;
    top: 20px;
    right: 26px;
    color: #64748b;
    pointer-events: none;
}
.radios {
    display: flex;
    gap: 32px;
}
.radios label {
    display: flex;
    align-items: center;
    gap: 16px;
    font-weight: 500;
}
.radios input {
    appearance: none;
    width: 32px;
    height: 32px;
    margin: 0;
    border: 2px solid #4060ff;
    border-radius: 50%;
    background: #fff;
    box-shadow: 0 2px 4px rgba(0, 0, 0, 0.08);
}
.radios input:checked {
    background: radial-gradient(circle, #4060ff 12px, #fff 13px);
}

.bottom-fade {
    position: fixed;
    left: 0;
    right: 0;
    bottom: 0;
    z-index: 2;
    height: 70px;
    background: linear-gradient(transparent, rgba(0, 0, 0, 0.07));
    pointer-events: none;
}
```
